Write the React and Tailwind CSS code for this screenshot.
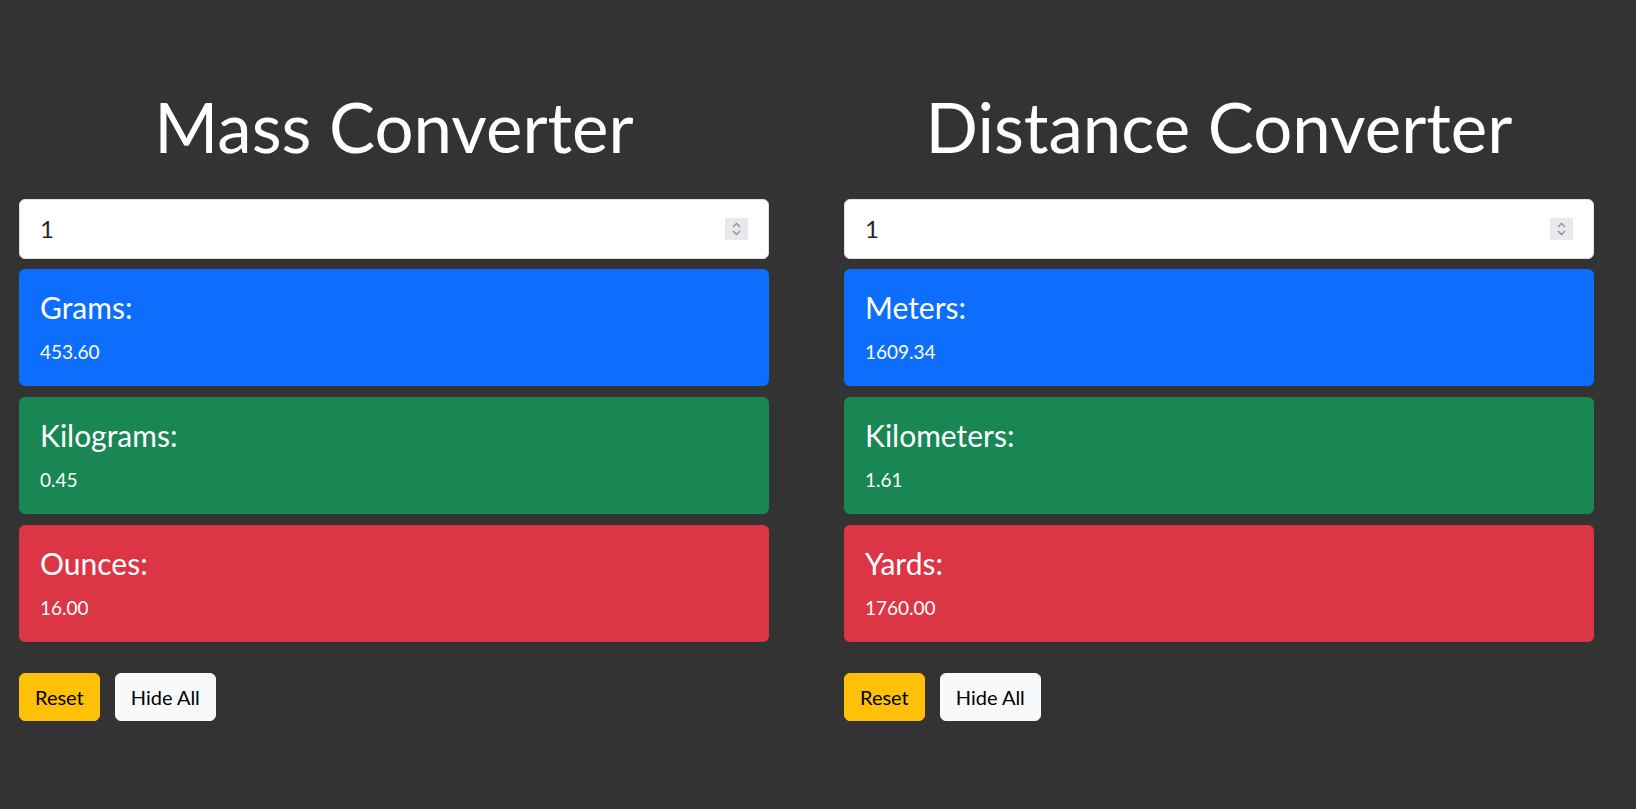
import React, { useState } from 'react';

const FONT = { fontFamily: '"Segoe UI", Lato, "Liberation Sans", sans-serif' };

const Spinner = () => (
    <div className="w-[23px] h-[22px] bg-[#e9e9ed] flex flex-col items-center justify-center gap-[2px]">
        <svg width="9" height="6" viewBox="0 0 9 6" fill="none" stroke="#8b8b95" strokeWidth="1.3">
            <path d="M1 5 L4.5 1.5 L8 5" />
        </svg>
        <svg width="9" height="6" viewBox="0 0 9 6" fill="none" stroke="#8b8b95" strokeWidth="1.3">
            <path d="M1 1 L4.5 4.5 L8 1" />
        </svg>
    </div>
);

const ResultCard = ({ label, value, color }) => (
    <div className={`h-[117px] rounded-md pl-[21px] pr-5 pt-[20px] text-white ${color}`}>
        <h3 className="text-[30px] leading-[1.2] font-normal">{label}</h3>
        <p className="mt-[13px] text-[19px] leading-[1.5]">{value}</p>
    </div>
);

const Converter = ({ title, rows }) => {
    const [amount, setAmount] = useState('1');
    return (
        <div className="w-[750px] flex flex-col">
            <h1 className="text-center text-[69px] leading-[1.2] font-normal text-white mb-[30px]">{title}</h1>
            <div className="h-[60px] rounded-md border border-[#dee2e6] bg-white flex items-center pl-5 pr-5">
                <input
                    type="text"
                    value={amount}
                    onChange={(e) => setAmount(e.target.value)}
                    className="flex-1 bg-transparent outline-none text-[24px] text-[#212529]"
                    style={FONT}
                />
                <Spinner />
            </div>
            <div className="mt-[10px] flex flex-col gap-[11px]">
                {rows.map((r) => (
                    <ResultCard key={r.label} {...r} />
                ))}
            </div>
            <div className="mt-[31px] flex gap-[15px]">
                <button className="h-[48px] px-[15px] rounded-md bg-[#ffc107] border border-[#ffc107] text-black text-[20px]">
                    Reset
                </button>
                <button className="h-[48px] px-[15px] rounded-md bg-[#f8f9fa] border border-[#f8f9fa] text-black text-[20px]">
                    Hide All
                </button>
            </div>
        </div>
    );
};

export default function App() {
    return (
        <div className="min-h-screen bg-[#333333]" style={FONT}>
            <div className="flex gap-[75px] pl-[19px] pt-[86px]">
                <Converter
                    title="Mass Converter"
                    rows={[
                        { label: 'Grams:', value: '453.60', color: 'bg-[#0d6efd]' },
                        { label: 'Kilograms:', value: '0.45', color: 'bg-[#198754]' },
                        { label: 'Ounces:', value: '16.00', color: 'bg-[#dc3545]' },
                    ]}
                />
                <Converter
                    title="Distance Converter"
                    rows={[
                        { label: 'Meters:', value: '1609.34', color: 'bg-[#0d6efd]' },
                        { label: 'Kilometers:', value: '1.61', color: 'bg-[#198754]' },
                        { label: 'Yards:', value: '1760.00', color: 'bg-[#dc3545]' },
                    ]}
                />
            </div>
        </div>
    );
}
